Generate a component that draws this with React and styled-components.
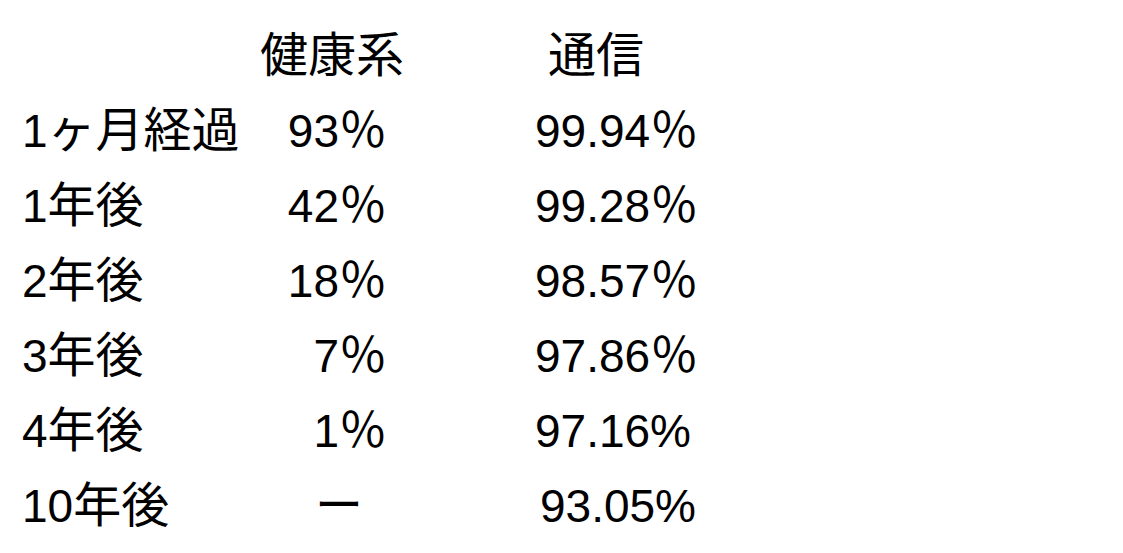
import React from 'react'
import styled, { createGlobalStyle } from 'styled-components'

const GlobalStyle = createGlobalStyle`
    html, body {
        margin: 0;
        padding: 0;
        background: #ffffff;
    }
    body {
        font-family: "Liberation Sans", "Noto Sans CJK JP", sans-serif;
        color: #000000;
    }
`

// CJK glyphs (and the full-width ％) sit a touch larger than the digits
const rows = [
    { num: '1', label: 'ヶ月経過', health: '93', hUnit: '％', comm: '99.94', cUnit: '％' },
    { num: '1', label: '年後', health: '42', hUnit: '％', comm: '99.28', cUnit: '％' },
    { num: '2', label: '年後', health: '18', hUnit: '％', comm: '98.57', cUnit: '％' },
    { num: '3', label: '年後', health: '7', hUnit: '％', comm: '97.86', cUnit: '％' },
    { num: '4', label: '年後', health: '1', hUnit: '％', comm: '97.16%', cUnit: '' },
    { num: '10', label: '年後', health: '', hUnit: 'ー', comm: '93.05%', cUnit: '', healthPad: 24, commShift: 5 },
]

function App() {
    return (
        <>
            <GlobalStyle />
            <Table>
                <Row>
                    <Cell />
                    <Heading shift={20}><Kanji>健康系</Kanji></Heading>
                    <Heading shift={161}><Kanji>通信</Kanji></Heading>
                </Row>
                {rows.map((r) => (
                    <Row key={r.num + r.label}>
                        <Cell>{r.num}<Kanji>{r.label}</Kanji></Cell>
                        <Health pad={r.healthPad || 0}>{r.health}<Kanji>{r.hUnit}</Kanji></Health>
                        <Comm shift={r.commShift || 0}>{r.comm}<Kanji>{r.cUnit}</Kanji></Comm>
                    </Row>
                ))}
            </Table>
        </>
    )
}

const Table = styled.div`
    display: flex;
    flex-direction: column;
    padding: 14px 0 0 22px;
    width: 1123px;
    height: 553px;
    box-sizing: border-box;
`

const Row = styled.div`
    display: grid;
    grid-template-columns: 218px 147px 1fr;
    height: 75px;
    align-items: center;
    font-size: 46px;
    line-height: 75px;
    white-space: nowrap;
`

const Kanji = styled.span`
    font-family: "Noto Sans CJK JP", sans-serif;
    font-size: 48px;
`

const Cell = styled.div``

const Heading = styled.div`
    margin-left: ${({ shift }) => shift}px;
`

const Health = styled.div`
    text-align: right;
    padding-right: ${({ pad }) => pad}px;
`

const Comm = styled.div`
    margin-left: ${({ shift }) => 148 + shift}px;
`

export default App
